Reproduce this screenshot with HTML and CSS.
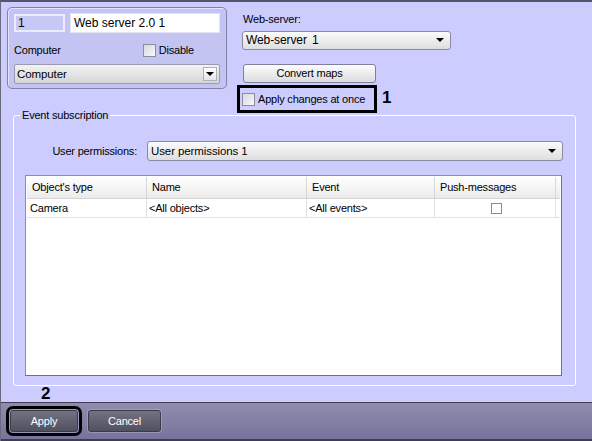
FILE: index.html
```html
<!DOCTYPE html>
<html>
<head>
<meta charset="utf-8">
<link rel="stylesheet" href="styles.css">
</head>
<body>
<div class="window">
  <div class="main">
    <div class="top">
      <div class="card">
        <div class="card-row">
          <div class="field field-id">1</div>
          <div class="field field-name">Web server 2.0 1</div>
        </div>
        <div class="card-row card-row-mid">
          <span class="label">Computer</span>
          <span class="check-label"><span class="checkbox"></span><span class="label">Disable</span></span>
        </div>
        <div class="combo combo-btn">
          <span class="combo-text">Computer</span>
          <span class="combo-button"><span class="arrow"></span></span>
        </div>
      </div>
      <div class="side">
        <div class="label side-label">Web-server:</div>
        <div class="combo combo-web">
          <span class="combo-text combo-text-wide">Web-server 1</span>
          <span class="arrow"></span>
        </div>
        <div class="button-light">Convert maps</div>
        <div class="apply-row">
          <span class="check-label highlight"><span class="checkbox"></span><span class="label">Apply changes at once</span></span>
          <span class="marker">1</span>
        </div>
      </div>
    </div>
    <fieldset class="group">
      <legend class="label">Event subscription</legend>
      <div class="perm-row">
        <span class="label perm-label">User permissions:</span>
        <div class="combo combo-perm">
          <span class="combo-text">User permissions 1</span>
          <span class="arrow"></span>
        </div>
      </div>
      <div class="table">
        <div class="thead">
          <div class="th">Object's type</div>
          <div class="th">Name</div>
          <div class="th">Event</div>
          <div class="th">Push-messages</div>
          <div class="th th-rest"></div>
        </div>
        <div class="trow">
          <div class="td td-first">Camera</div>
          <div class="td">&lt;All objects&gt;</div>
          <div class="td">&lt;All events&gt;</div>
          <div class="td td-center"><span class="cell-check"></span></div>
        </div>
      </div>
    </fieldset>
  </div>
  <div class="footer">
    <div class="button-dark highlight-btn">Apply<span class="marker marker-2">2</span></div>
    <div class="button-dark">Cancel</div>
  </div>
</div>
</body>
</html>
```

FILE: styles.css
```css
html, body {
  margin: 0;
  padding: 0;
}
body {
  font-family: "Liberation Sans", Arial, sans-serif;
  font-size: 11px;
  color: #000;
  background: #ccccff;
}
.window {
  width: 592px;
  height: 441px;
  box-sizing: border-box;
  border-top: 2px solid #54546a;
  border-left: 1px solid #6a6a80;
  display: flex;
  flex-direction: column;
  overflow: hidden;
  background: #ccccff;
}
.main {
  flex: 1;
  position: relative;
}
.label {
  letter-spacing: -0.2px;
  line-height: 13px;
}
.top {
  display: flex;
  height: 107px;
  padding: 5px 0 0 6px;
  box-sizing: border-box;
}
.card {
  width: 220px;
  height: 82px;
  box-sizing: border-box;
  border: 1px solid #8282a8;
  border-radius: 5px;
  background: #c4c4f3;
  box-shadow: inset 1px 1px 0 #e2e2ff;
  padding: 5px 0 0 6px;
}
.card-row {
  display: flex;
  align-items: center;
  gap: 5px;
}
.field {
  box-sizing: border-box;
  font-size: 12px;
  line-height: 14px;
  padding: 1px 3px;
  border: 1px solid #f0f0ff;
}
.field-id {
  width: 51px;
  height: 18px;
  background: #c8c8f6;
  border-width: 2px;
  border-color: #ececff;
  padding: 0 2px;
}
.field-name {
  width: 150px;
  height: 20px;
  background: #fff;
  border-color: #e4e4f4;
  padding: 2px 3px;
}
.card-row-mid {
  margin-top: 11px;
  height: 13px;
  justify-content: space-between;
  width: 180px;
}
.check-label {
  display: inline-flex;
  align-items: center;
  gap: 3px;
}
.checkbox {
  width: 13px;
  height: 13px;
  box-sizing: border-box;
  border: 1px solid #8c8c9c;
  background: linear-gradient(135deg, #d8d8e0, #f8f8fc);
  display: inline-block;
}
.combo {
  box-sizing: border-box;
  height: 20px;
  border: 1px solid #8a8aa0;
  border-radius: 2px;
  background: linear-gradient(#fbfbfb, #dedee0);
  display: flex;
  align-items: center;
  justify-content: space-between;
  padding: 0 6px 0 3px;
}
.combo-text {
  font-size: 11.5px;
  letter-spacing: -0.1px;
}
.combo-text-wide {
  font-size: 12px;
  word-spacing: 2px;
}
.combo-btn {
  width: 206px;
  margin-top: 7px;
  padding-right: 2px;
  padding-left: 2px;
  background: linear-gradient(#f2f2f2, #d6d6d8);
  border-color: #9a9ab0;
}
.combo-button {
  width: 14px;
  height: 14px;
  box-sizing: border-box;
  border: 1px solid #b0b0b8;
  background: linear-gradient(#ffffff, #e4e4e8);
  display: flex;
  align-items: center;
  justify-content: center;
}
.arrow {
  width: 0;
  height: 0;
  border-left: 4px solid transparent;
  border-right: 4px solid transparent;
  border-top: 4px solid #000;
}
.side {
  margin-left: 15px;
  display: flex;
  flex-direction: column;
  align-items: flex-start;
  padding-top: 6px;
}
.side-label {
  margin-left: 1px;
  height: 13px;
}
.combo-web {
  width: 209px;
  margin-top: 5px;
  border-radius: 3px;
}
.button-light {
  margin-top: 14px;
  margin-left: 1px;
  width: 133px;
  height: 21px;
  box-sizing: border-box;
  border: 1px solid #80809a;
  border-radius: 3px;
  background: linear-gradient(#fdfdfd, #dcdce0);
  display: flex;
  align-items: center;
  justify-content: center;
  letter-spacing: -0.2px;
}
.apply-row {
  display: flex;
  align-items: center;
  margin-top: 6px;
  margin-left: -1px;
}
.highlight {
  height: 20px;
  box-sizing: border-box;
  padding: 0 8px 0 1px;
  outline: 3px solid #000;
  outline-offset: 1px;
}
.marker {
  font-weight: bold;
  font-size: 17px;
  line-height: 17px;
  margin-left: 9px;
  margin-top: -3px;
}
.group {
  margin: 0 0 0 12px;
  width: 563px;
  height: 277px;
  box-sizing: border-box;
  border: 1px solid #ffffff;
  border-radius: 3px;
  padding: 0;
  min-width: 0;
}
.group legend {
  padding: 0 2px;
  margin-left: 6px;
}
.perm-row {
  display: flex;
  align-items: center;
  margin-top: 19px;
}
.perm-label {
  width: 123px;
  text-align: right;
}
.combo-perm {
  margin-left: 10px;
  width: 416px;
  border-radius: 3px;
}
.table {
  margin: 14px 0 0 11px;
  width: 537px;
  height: 201px;
  box-sizing: border-box;
  border: 1px solid #8e8e9c;
  border-right-color: #70707e;
  border-bottom-color: #70707e;
  background: #fff;
  padding: 1px;
}
.thead, .trow {
  display: grid;
  grid-template-columns: 120px 160px 128px 121px auto;
}
.thead {
  height: 21px;
  background: linear-gradient(#ffffff, #ebebeb);
  border-bottom: 1px solid #d4d4d4;
}
.th {
  border-right: 1px solid #d8d8d8;
  padding-left: 5px;
  line-height: 21px;
  letter-spacing: -0.2px;
}
.th-rest {
  border-right: none;
}
.trow {
  height: 19px;
  box-sizing: border-box;
  border-bottom: 1px solid #e2e2e2;
  grid-template-columns: 120px 160px 128px 121px;
}
.td {
  border-right: 1px solid #e2e2e2;
  padding-left: 2px;
  line-height: 18px;
  letter-spacing: -0.2px;
}
.td-first {
  padding-left: 3px;
}
.td-center {
  display: flex;
  align-items: center;
  justify-content: center;
}
.cell-check {
  width: 11px;
  height: 11px;
  box-sizing: border-box;
  border: 1px solid #8a8a8a;
  background: #fff;
}
.footer {
  height: 39px;
  box-sizing: border-box;
  border-top: 1px solid #3e3e50;
  border-bottom: 2px solid #3e3e50;
  background: linear-gradient(#8e8cae, #76749c);
  display: flex;
  align-items: flex-start;
  padding: 7px 0 0 9px;
  gap: 10px;
}
.button-dark {
  position: relative;
  height: 22px;
  box-sizing: border-box;
  border: 1px solid #3a3a48;
  border-radius: 3px;
  background: linear-gradient(#727282, #50505e);
  box-shadow: 0 0 0 1px rgba(200, 200, 230, 0.35);
  color: #fff;
  display: flex;
  align-items: center;
  justify-content: center;
  letter-spacing: -0.2px;
  width: 73px;
}
.highlight-btn {
  width: 68px;
  outline: 3px solid #000;
  outline-offset: 1px;
}
.marker-2 {
  position: absolute;
  left: 30px;
  bottom: 29px;
  color: #000;
  margin: 0;
}
```
